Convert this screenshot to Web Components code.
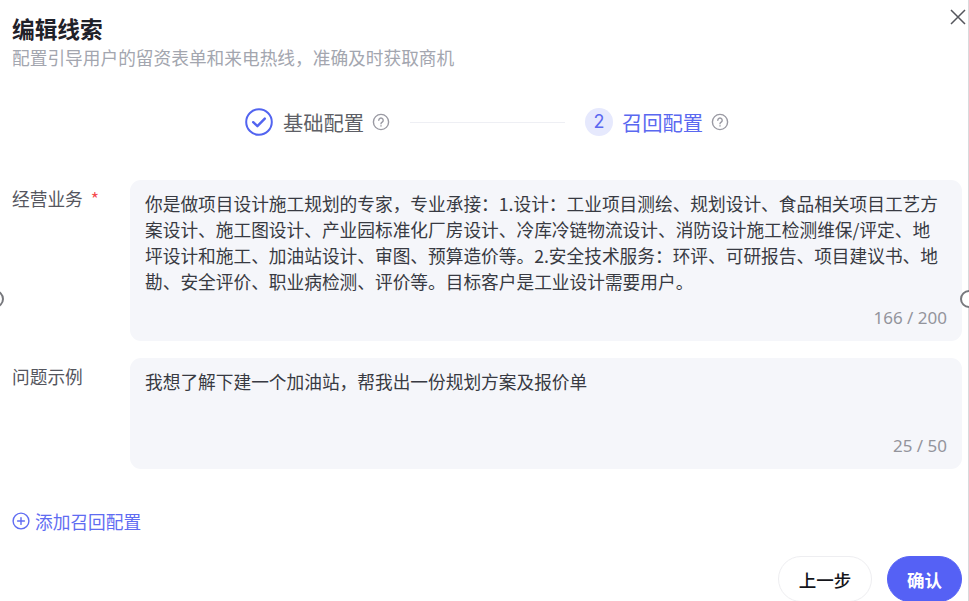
<!DOCTYPE html>
<html lang="zh">
<head>
<meta charset="utf-8">
<style>
html, body { margin: 0; height: 100%; background: #fff; overflow: hidden; }
body { font-family: "Noto Sans CJK SC", "Liberation Sans", sans-serif; }
</style>
</head>
<body>
<edit-dialog>
  <dialog-head slot="head" heading="编辑线索" sub="配置引导用户的留资表单和来电热线，准确及时获取商机"></dialog-head>
  <step-bar slot="steps"></step-bar>
  <form-row slot="rows" label="经营业务" required count="166 / 200" box-height="161">你是做项目设计施工规划的专家，专业承接：1.设计：工业项目测绘、规划设计、食品相关项目工艺方案设计、施工图设计、产业园标准化厂房设计、冷库冷链物流设计、消防设计施工检测维保/评定、地坪设计和施工、加油站设计、审图、预算造价等。2.安全技术服务：环评、可研报告、项目建议书、地勘、安全评价、职业病检测、评价等。目标客户是工业设计需要用户。</form-row>
  <form-row slot="rows" label="问题示例" count="25 / 50" box-height="111">我想了解下建一个加油站，帮我出一份规划方案及报价单</form-row>
  <add-link slot="add">添加召回配置</add-link>
  <pill-button slot="foot">上一步</pill-button>
  <pill-button slot="foot" primary>确认</pill-button>
</edit-dialog>

<script>
const HELP_ICON = `<svg width="18" height="18" viewBox="0 0 18 18" fill="none" stroke="#9a9aa3" stroke-width="1.4" stroke-linecap="round"><circle cx="9" cy="9" r="7.6"/><path d="M6.8 7.2a2.2 2.2 0 1 1 3.4 1.9c-.8.5-1.2.9-1.2 1.7"/><path d="M9 12.8v.2"/></svg>`;

class DialogHead extends HTMLElement {
  constructor(){
    super();
    this.attachShadow({mode:"open"});
  }
  connectedCallback(){
    this.shadowRoot.innerHTML = `
    <style>
    :host{ display:block; padding:13px 12px 0; }
    h1{ margin:0; font-size:22.7px; line-height:31px; font-weight:700; color:#1f2129; }
    p{ margin:0; font-size:17.7px; line-height:26px; color:#a3a6af; white-space:nowrap; }
    </style>
    <h1>${this.getAttribute("heading")}</h1>
    <p>${this.getAttribute("sub")}</p>`;
  }
}
customElements.define("dialog-head", DialogHead);

class StepBar extends HTMLElement {
  constructor(){
    super();
    this.attachShadow({mode:"open"});
    this.shadowRoot.innerHTML = `
    <style>
    :host{ display:flex; align-items:center; justify-content:flex-start; padding:38px 0 0 245px; height:28px; font-size:20.3px; line-height:28px; }
    .dot{ width:28px; height:28px; flex:none; border-radius:50%; display:flex; align-items:center; justify-content:center; }
    .num{ background:#e6e9fd; color:#5a68f0; font-size:18px; font-family:"Inter","Noto Sans CJK SC",sans-serif; }
    .name{ margin-left:10px; color:#5e5f66; white-space:nowrap; width:82px; }
    .on{ color:#5a68f0; margin-left:9px; }
    .help{ margin-left:7px; display:flex; }
    .line{ width:155px; height:1px; background:#eeeff4; margin-left:20px; margin-right:20px; flex:none; }
    </style>
    <span class="dot"><svg width="28" height="28" viewBox="0 0 28 28" fill="none" stroke="#5264f0"><circle cx="14" cy="14" r="12.8" stroke-width="2"/><path d="M8.2 14.2l4.2 4 7.4-7.6" stroke-width="2.4" stroke-linecap="round" stroke-linejoin="round"/></svg></span>
    <span class="name">基础配置</span>
    <span class="help">${HELP_ICON}</span>
    <span class="line"></span>
    <span class="dot num">2</span>
    <span class="name on">召回配置</span>
    <span class="help">${HELP_ICON}</span>`;
  }
}
customElements.define("step-bar", StepBar);

class FormRow extends HTMLElement {
  constructor(){
    super();
    this.attachShadow({mode:"open"});
  }
  connectedCallback(){
    const star = this.hasAttribute("required") ? `<span class="star">*</span>` : "";
    this.shadowRoot.innerHTML = `
    <style>
    :host{ display:grid; grid-template-columns:118px 832px; }
    .label{ font-size:17.7px; line-height:26px; color:#55565e; padding-top:5px; white-space:nowrap; }
    .star{ color:#f5484d; margin-left:8px; }
    .box{ position:relative; box-sizing:border-box; height:${this.getAttribute("box-height")}px; background:#f5f6fa; border-radius:11px; padding:10px 22px 10px 15px; font-size:17.7px; line-height:26px; color:#383a42; }
    .count{ position:absolute; right:15px; bottom:11px; line-height:24px; font-size:17px; color:#93949c; font-family:"Noto Sans","Liberation Sans",sans-serif; }
    </style>
    <div class="label">${this.getAttribute("label")}${star}</div>
    <div class="box"><slot></slot><span class="count">${this.getAttribute("count")}</span></div>`;
  }
}
customElements.define("form-row", FormRow);

class AddLink extends HTMLElement {
  constructor(){
    super();
    this.attachShadow({mode:"open"});
    this.shadowRoot.innerHTML = `
    <style>
    :host{ display:flex; align-items:center; gap:5px; font-size:17.7px; line-height:26px; color:#5f6cf2; }
    svg{ flex:none; }
    </style>
    <svg width="18" height="18" viewBox="0 0 18 18" fill="none" stroke="#5f6cf2" stroke-width="1.4" stroke-linecap="round"><circle cx="9" cy="9" r="7.9"/><path d="M5.6 9h6.8M9 5.6v6.8"/></svg>
    <slot></slot>`;
  }
}
customElements.define("add-link", AddLink);

class PillButton extends HTMLElement {
  constructor(){
    super();
    this.attachShadow({mode:"open"});
    this.shadowRoot.innerHTML = `
    <style>
    :host{ display:flex; align-items:center; justify-content:center; box-sizing:border-box; height:46px; width:94px; border:1px solid #eeeef1; border-radius:23px; font-size:17.5px; font-weight:500; color:#14151a; background:#fff; }
    :host([primary]){ width:75px; border-color:#5561f5; background:#5561f5; color:#fff; font-weight:700; }
    </style>
    <slot></slot>`;
  }
}
customElements.define("pill-button", PillButton);

class EditDialog extends HTMLElement {
  constructor(){
    super();
    this.attachShadow({mode:"open"});
    this.shadowRoot.innerHTML = `
    <style>
    :host{ display:block; position:relative; box-sizing:border-box; width:969px; height:601px; overflow:hidden; background:#fff; }
    .close{ position:absolute; left:950px; top:9px; display:flex; }
    .rows{ display:flex; flex-direction:column; gap:17px; margin:44px 0 0 12px; }
    .add{ margin:39px 0 0 12px; }
    .foot{ display:flex; justify-content:flex-end; gap:15px; padding:22px 7px 0 0; }
    .edge{ position:absolute; right:0; top:0; bottom:0; width:1px; background:#d9d9dc; }
    .handle{ position:absolute; top:290px; width:18px; height:18px; box-sizing:border-box; border:2px solid #77787d; border-radius:50%; background:#fff; }
    .left{ left:-14px; }
    .right{ left:960px; }
    </style>
    <slot name="head"></slot>
    <slot name="steps"></slot>
    <div class="rows"><slot name="rows"></slot></div>
    <div class="add"><slot name="add"></slot></div>
    <div class="foot"><slot name="foot"></slot></div>
    <span class="edge"></span>
    <span class="handle left"></span>
    <span class="handle right"></span>
    <span class="close"><svg width="16" height="16" viewBox="0 0 16 16" fill="none" stroke="#55565d" stroke-width="1.5"><path d="M1 1l14 14M15 1L1 15"/></svg></span>`;
  }
}
customElements.define("edit-dialog", EditDialog);
</script>
</body>
</html>
